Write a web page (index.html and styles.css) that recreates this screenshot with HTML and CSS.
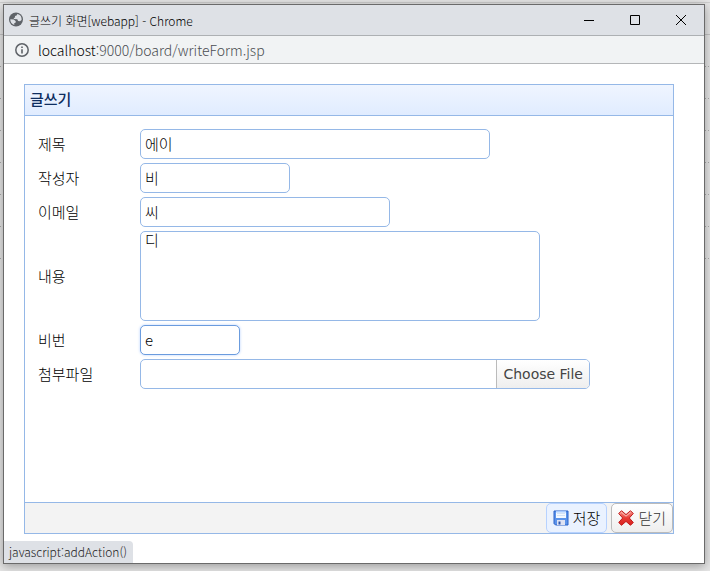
FILE: index.html
```html
<!DOCTYPE html>
<html lang="ko">
<head>
<meta charset="utf-8">
<title>글쓰기 화면[webapp]</title>
<link rel="stylesheet" href="styles.css">
</head>
<body>
<div class="window">
  <header class="titlebar">
    <svg class="globe" viewBox="0 0 16 16" aria-hidden="true">
      <circle cx="8" cy="7.5" r="7" fill="#5f6368"/>
      <path d="M9.3 1.9 8.6 3.4 7 3.9 7.1 5.4 5.7 5.9 6 7.1 9.3 7.2 10.1 9 12 9.2 13.6 8A5.7 5.7 0 0 0 9.3 1.9Z" fill="#dee1e6"/>
      <path d="M2.3 7.2 5.8 7.6 7.8 9.2 7.5 10.8 6.2 11.2 6.3 12.9A5.7 5.7 0 0 1 2.3 7.2Z" fill="#dee1e6"/>
    </svg>
    <span class="title">글쓰기 화면[webapp] - Chrome</span>
    <div class="controls">
      <button type="button" class="control" aria-label="최소화"><svg viewBox="0 0 10 10"><path d="M0 5.5H10"/></svg></button>
      <button type="button" class="control" aria-label="최대화"><svg viewBox="0 0 10 10"><path d="M.5 .5H9.5V9.5H.5Z"/></svg></button>
      <button type="button" class="control" aria-label="창 닫기"><svg viewBox="0 0 10 10"><path d="M0 0 10 10M10 0 0 10"/></svg></button>
    </div>
  </header>
  <div class="address">
    <svg class="info" viewBox="0 0 14 14" aria-hidden="true">
      <circle cx="7" cy="7" r="6.2" fill="none" stroke="#5f6368" stroke-width="1.5"/>
      <path d="M6.2 6.2H7.8V10.5H6.2ZM6.2 3.5H7.8V5H6.2Z" fill="#5f6368"/>
    </svg>
    <span class="url"><span class="host">localhost</span>:9000/board/writeForm.jsp</span>
  </div>
  <main class="page">
    <form class="panel">
      <h1 class="panel-title">글쓰기</h1>
      <div class="fields">
        <label for="subject">제목</label>
        <input class="box w350" id="subject" type="text" value="에이">
        <label for="writer">작성자</label>
        <input class="box w150" id="writer" type="text" value="비">
        <label for="email">이메일</label>
        <input class="box w250" id="email" type="text" value="씨">
        <label for="content">내용</label>
        <textarea class="box w400" id="content">디</textarea>
        <label for="pw">비번</label>
        <input class="box w100 active" id="pw" type="text" value="e">
        <label for="file">첨부파일</label>
        <div class="box filebox w450">
          <input class="filename" id="file" type="text" readonly>
          <button type="button" class="choose">Choose File</button>
        </div>
      </div>
      <footer class="actions">
        <button type="button" class="btn hover">
          <svg class="icon" viewBox="0 0 16 16" aria-hidden="true">
            <path d="M1 1H15V15H2.5L1 13.5Z" fill="#5b93ea" stroke="#2d62c8"/>
            <path d="M3 1.5H13V8H3Z" fill="#f5f9ff"/>
            <path d="M3 1H13V2.5H3Z" fill="#a9ccff"/>
            <path d="M4 3.5H12M4 5.5H12" stroke="#d4e3f7"/>
            <path d="M4 10H12V15H4Z" fill="#dfe3f3"/>
            <path d="M5.5 11.5H7.5V14.5H5.5Z" fill="#3156a8"/>
          </svg>
          저장
        </button>
        <button type="button" class="btn">
          <svg class="icon" viewBox="0 0 16 16" aria-hidden="true">
            <defs><linearGradient id="red" x2="0" y2="1"><stop stop-color="#f79a93"/><stop offset=".5" stop-color="#e83a34"/><stop offset="1" stop-color="#d8201e"/></linearGradient></defs>
            <path d="M3.5 .7 8 4.6 12.5 .7 15.3 3.5 11.3 8 15.3 12.5 12.5 15.3 8 11.4 3.5 15.3 .7 12.5 4.7 8 .7 3.5Z" fill="url(#red)" stroke="#c11c1c" stroke-linejoin="round"/>
            <path d="M2.3 3.5 3.5 2.3 8 6.2 12.5 2.3" fill="none" stroke="#fbc1bb"/>
          </svg>
          닫기
        </button>
      </footer>
    </form>
  </main>
  <div class="status">javascript:addAction()</div>
</div>
</body>
</html>
```

FILE: styles.css
```css
* { box-sizing: border-box; }

body {
  display: flex;
  min-height: 100vh;
  margin: 0;
  padding: 4px 5px 7px 3px;
  font-family: "Noto Sans CJK KR", sans-serif;
  font-weight: 300;
  color: #000;
  background:
    repeating-linear-gradient(90deg, transparent 0 1px, #e6e6e6 1px 3px) 0 66px / 100% 193px no-repeat,
    repeating-linear-gradient(180deg, #aaa 0 1px, #e6e6e6 1px 32px) 0 66px / 100% 193px no-repeat,
    linear-gradient(#c4c4c4, #c4c4c4) 0 34px / 100% 1px no-repeat,
    linear-gradient(#cfcfcf, #cfcfcf) 0 2px / 100% 1px no-repeat,
    #e6e6e6;
}

button, input, textarea { font: inherit; }

.window {
  position: relative;
  display: flex;
  flex: 1;
  flex-direction: column;
  border: 1px solid #6a6a6a;
  background: #fff;
  box-shadow: 0 2px 10px rgba(0, 0, 0, .35);
}

.titlebar {
  display: flex;
  align-items: center;
  height: 31px;
  padding-left: 4px;
  border-bottom: 1px solid #adb0b3;
  background: #dee1e6;
}

.globe { width: 16px; height: 16px; }

.title {
  flex: 1;
  margin-left: 5px;
  font-size: 12px;
}

.controls { display: flex; }

.control {
  width: 46px;
  height: 30px;
  padding: 0;
  border: 0;
  background: none;
}

.control svg {
  display: block;
  width: 10px;
  height: 10px;
  margin: 0 auto;
  fill: none;
  stroke: #000;
}

.address {
  display: flex;
  align-items: center;
  height: 28px;
  padding-left: 11px;
  border-bottom: 1px solid #b4b6b8;
  background: #f1f3f4;
}

.info { width: 14px; height: 14px; }

.url {
  margin-left: 9px;
  font-size: 14px;
  line-height: 20px;
  color: #4a4d51;
}

.host { color: #000; }

.page {
  display: flex;
  flex: 1;
  padding: 20px 30px 29px 20px;
}

.panel {
  display: flex;
  flex: 1;
  flex-direction: column;
  border: 1px solid #95b8e7;
}

.panel-title {
  height: 31px;
  margin: 0;
  padding-left: 5px;
  border-bottom: 1px solid #95b8e7;
  background: linear-gradient(#eff5ff, #e0ecff);
  font-size: 15px;
  font-weight: 500;
  line-height: 28px;
  color: #0e2d5f;
}

.fields {
  display: grid;
  flex: 1;
  grid-template-columns: 98px 1fr;
  align-content: start;
  align-items: center;
  gap: 4px;
  padding: 13px;
  font-size: 15px;
  line-height: 20px;
}

.box {
  height: 30px;
  padding: 0 4px 2px;
  border: 1px solid #95b8e7;
  border-radius: 5px;
  outline: 0;
  background: #fff;
  color: #000;
}

textarea.box {
  display: block;
  height: 90px;
  line-height: 16px;
  resize: none;
}

.w100 { width: 100px; }
.w150 { width: 150px; }
.w250 { width: 250px; }
.w350 { width: 350px; }
.w400 { width: 400px; }
.w450 { width: 450px; }

.active {
  border-color: #6b9cde;
  box-shadow: 0 0 3px #b7d2ff;
}

.filebox {
  display: flex;
  overflow: hidden;
  padding: 0;
}

.filename {
  flex: 1;
  min-width: 0;
  border: 0;
  outline: 0;
  background: none;
}

.choose {
  padding: 0 6px;
  border: 0;
  border-left: 1px solid #bbb;
  background: linear-gradient(#fff, #eee);
  font: 14px/28px "DejaVu Sans", sans-serif;
  color: #444;
}

.actions {
  display: flex;
  justify-content: flex-end;
  gap: 4px;
  height: 31px;
  border-top: 1px solid #95b8e7;
  background: #f3f3f3;
}

.btn {
  display: flex;
  align-items: center;
  gap: 4px;
  height: 30px;
  padding: 0 6px;
  border: 1px solid #bbb;
  border-radius: 5px;
  background: linear-gradient(#fff, #eee);
  font-size: 15px;
  line-height: 26px;
  color: #333;
}

.btn.hover {
  border-color: #b7d2ff;
  background: #eaf2ff;
  color: #000;
}

.icon { width: 16px; height: 16px; }

.status {
  position: absolute;
  bottom: 0;
  left: 0;
  height: 22px;
  padding: 0 6px 0 5px;
  border-top-right-radius: 4px;
  background: #dee1e6;
  font-size: 12px;
  line-height: 22px;
  color: #222;
}
```
